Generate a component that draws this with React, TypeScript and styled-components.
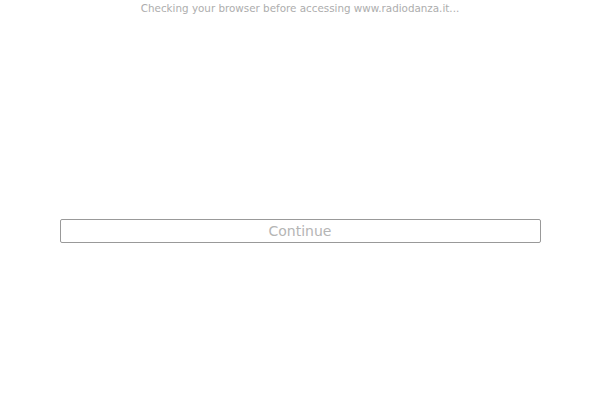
import React from "react";
import styled, { createGlobalStyle } from "styled-components";

const GlobalStyle = createGlobalStyle`
  html, body {
    margin: 0;
    padding: 0;
    background: #ffffff;
    font-family: "DejaVu Sans", Verdana, sans-serif;
  }
`;

const Page = styled.div`
  display: flex;
  flex-direction: column;
  align-items: center;
  height: 400px;
`;

const Notice = styled.div`
  margin-top: 1px;
  font-size: 10.35px;
  line-height: 14px;
  color: #adadad;
  text-align: center;
`;

const ContinueButton = styled.button`
  margin-top: 204px;
  width: 481px;
  height: 24px;
  padding: 0 0 1px;
  background: #ffffff;
  border: 1px solid #999999;
  border-radius: 2px;
  font-family: "DejaVu Sans", Verdana, sans-serif;
  font-size: 14px;
  color: #b5b5b5;
  cursor: pointer;
`;

export default function App() {
  return (
    <>
      <GlobalStyle />
      <Page>
        <Notice>Checking your browser before accessing www.radiodanza.it...</Notice>
        <ContinueButton>Continue</ContinueButton>
      </Page>
    </>
  );
}
